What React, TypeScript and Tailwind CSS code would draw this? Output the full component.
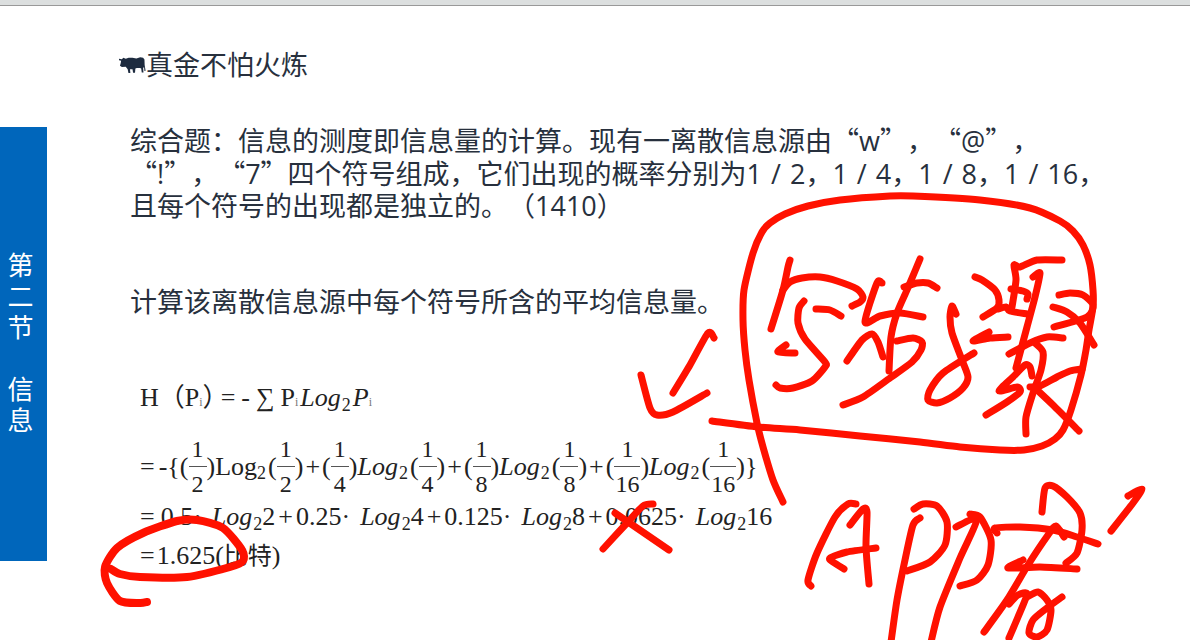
import React from "react";

type Point = [number, number];

const STROKES: { width: number; points: Point[] }[] = [
  // frame around the handwritten note
  { width: 7, points: [[712, 421], [758, 427], [800, 430], [860, 436], [920, 442], [960, 447], [1000, 450], [1024, 450], [1042, 446], [1055, 439], [1063, 430], [1071, 410], [1081, 375], [1086, 350], [1089, 330], [1093, 307], [1093, 290], [1090, 265], [1083, 245], [1073, 231], [1060, 221], [1030, 208], [980, 200], [913, 196], [890, 196], [840, 200], [808, 206], [785, 214], [770, 223], [762, 232], [753, 253], [744, 290], [743, 320], [745, 350], [749, 380], [757, 423], [763, 447], [773, 480], [783, 502]] },
  { width: 7, points: [[790, 260], [788, 267], [783, 290], [771, 329]] },
  { width: 7, points: [[783, 290], [790, 282], [802, 278], [820, 277], [837, 281], [857, 289], [863, 297], [860, 302], [852, 306]] },
  { width: 7, points: [[804, 301], [799, 308], [798, 323], [805, 339], [825, 362], [825, 367], [812, 381], [793, 388], [780, 388], [776, 385]] },
  { width: 7, points: [[816, 309], [830, 310], [841, 316]] },
  { width: 7, points: [[786, 345], [778, 352], [795, 353]] },
  { width: 7, points: [[882, 283], [877, 283], [865, 322], [880, 316], [900, 313], [923, 317]] },
  { width: 7, points: [[920, 259], [915, 271], [907, 290], [897, 313], [891, 337], [889, 371]] },
  { width: 7, points: [[904, 287], [917, 283], [928, 283], [937, 288]] },
  { width: 7, points: [[847, 361], [862, 340], [872, 334], [878, 342], [883, 357]] },
  { width: 7, points: [[897, 341], [913, 338], [922, 342], [921, 350], [912, 362], [890, 378], [863, 397], [843, 405]] },
  { width: 7, points: [[956, 314], [952, 306], [950, 317], [952, 333], [962, 360], [968, 377], [963, 388], [950, 398], [937, 403], [928, 400], [930, 390], [943, 373], [974, 353]] },
  { width: 7, points: [[975, 277], [982, 280], [995, 290], [999, 300], [997, 308], [983, 317]] },
  { width: 7, points: [[1062, 260], [1037, 260], [1020, 267], [1014, 265], [1016, 280], [1012, 307]] },
  { width: 7, points: [[1011, 289], [1023, 291], [1028, 294], [1027, 299]] },
  { width: 7, points: [[998, 309], [1006, 307], [1010, 311], [1027, 314]] },
  { width: 7, points: [[1033, 277], [1040, 273], [1035, 297], [1027, 327], [1016, 368]] },
  { width: 7, points: [[989, 332], [973, 341], [990, 338], [1008, 337]] },
  { width: 7, points: [[1009, 354], [1030, 343], [1047, 337], [1063, 338]] },
  { width: 7, points: [[1035, 343], [1043, 352], [1041, 370], [1033, 393], [1026, 417], [1026, 434]] },
  { width: 7, points: [[1032, 376], [1030, 367], [1025, 365], [1013, 377], [999, 391], [1017, 387], [1020, 392], [1007, 402], [986, 415]] },
  { width: 7, points: [[1030, 387], [1040, 386], [1057, 377], [1070, 371], [1082, 369]] },
  { width: 7, points: [[1035, 388], [1053, 405], [1079, 431]] },
  { width: 7, points: [[1059, 295], [1070, 293], [1083, 295], [1093, 305], [1087, 317], [1054, 327]] },
  { width: 7, points: [[1053, 307], [1067, 312], [1080, 323], [1094, 345]] },
  // arrow towards the formula
  { width: 7, points: [[641, 375], [650, 408], [657, 415], [673, 412], [707, 393]] },
  { width: 7, points: [[714, 338], [708, 333], [690, 365], [673, 393]] },
  // cross
  { width: 7, points: [[615, 513], [669, 550]] },
  { width: 7, points: [[603, 549], [627, 523], [643, 506], [653, 504]] },
  // ring around the result
  { width: 8, points: [[111, 569], [120, 574], [140, 577], [187, 577], [230, 567], [243, 561], [242, 550], [223, 528], [197, 520], [177, 521], [143, 533], [117, 548], [105, 567], [107, 583], [120, 601], [140, 603], [147, 602]] },
  // second note
  { width: 7, points: [[856, 504], [848, 504], [835, 517], [817, 553], [808, 580], [811, 586]] },
  { width: 7, points: [[850, 525], [863, 509], [867, 512], [866, 547], [869, 584]] },
  { width: 7, points: [[876, 548], [847, 552], [830, 558], [833, 562], [844, 569]] },
  { width: 7, points: [[920, 518], [913, 525], [905, 560], [897, 600], [891, 642]] },
  { width: 7, points: [[914, 509], [923, 504], [937, 506], [947, 522], [945, 545], [930, 562], [907, 571]] },
  { width: 7, points: [[956, 527], [977, 519], [960, 558], [940, 607], [931, 642]] },
  { width: 7, points: [[970, 514], [980, 517], [991, 540], [988, 565], [977, 580], [960, 586]] },
  { width: 7, points: [[1042, 512], [1045, 488], [1053, 486], [1067, 497], [1080, 513], [1082, 530], [1077, 553], [1066, 563]] },
  { width: 7, points: [[997, 533], [995, 528], [1020, 527], [1053, 530], [1077, 537], [1098, 544]] },
  { width: 7, points: [[1064, 537], [1056, 526], [1048, 535], [1028, 565], [1007, 600], [984, 632]] },
  { width: 7, points: [[1023, 560], [1008, 568], [1040, 567], [1077, 569]] },
  { width: 7, points: [[1009, 604], [1018, 595], [1027, 594], [1018, 617], [1009, 638]] },
  { width: 7, points: [[1027, 597], [1038, 592], [1047, 600], [1051, 610], [1047, 630], [1037, 637], [1029, 633], [1033, 620], [1047, 608], [1062, 597]] },
  { width: 7, points: [[1128, 496], [1142, 489], [1133, 503], [1111, 531]] },
];

function smoothPath(p: Point[]): string {
  let d = `M${p[0][0]} ${p[0][1]}`;
  for (let i = 0; i < p.length - 1; i++) {
    const a = p[i - 1] ?? p[i];
    const b = p[i];
    const c = p[i + 1];
    const e = p[i + 2] ?? c;
    const k = 8;
    d += `C${b[0] + (c[0] - a[0]) / k} ${b[1] + (c[1] - a[1]) / k} ${c[0] - (e[0] - b[0]) / k} ${c[1] - (e[1] - b[1]) / k} ${c[0]} ${c[1]}`;
  }
  return d;
}

function Ink() {
  return (
    <svg
      className="pointer-events-none absolute left-0 top-0 h-[640px] w-[1190px]"
      viewBox="0 0 1190 640"
      fill="none"
      stroke="#ff1100"
      strokeLinecap="round"
      strokeLinejoin="round"
      aria-hidden="true"
    >
      {STROKES.map((s, i) => (
        <path key={i} d={smoothPath(s.points)} strokeWidth={s.width} />
      ))}
    </svg>
  );
}

function Bull() {
  return (
    <svg className="h-[18px] w-[27px]" viewBox="0 0 28 18" fill="#1d2b3f" aria-hidden="true">
      <path d="M0 2.5 3 3 4.5 1.6 7 2.6 10 1.6 14 1.4 18 2.2 22 1 25 1.6 26.4 3.4 26.6 9 27.6 15 26.4 15.2 26 11 25 12 25.4 16.8 23.6 16.8 23 12.6 21.8 12 18.5 12 17 12.6 16.6 17 14.6 17 14 13.4 11.4 13.4 11.8 17.4 9.8 17.4 9 13.4 7 10.8 3 11 1 9.8 1.8 6.8 2.2 4.6 0 4Z" />
    </svg>
  );
}

function Slash() {
  return <span className="mx-[9px]">/</span>;
}

function Cjk({ children }: { children: React.ReactNode }) {
  return <span className="font-['Noto_Sans_CJK_SC',sans-serif]">{children}</span>;
}

function Frac({ d }: { d: string }) {
  return (
    <span className="inline-flex flex-col items-center text-[24px]">
      <span className="flex h-[34px] items-center">1</span>
      <span className="h-px w-full min-w-[18px] self-stretch bg-[#555]" />
      <span className="flex h-[34px] items-center px-px">{d}</span>
    </span>
  );
}

function Log({ upright = false }: { upright?: boolean }) {
  return (
    <span>
      <span className={upright ? "" : "pr-px italic"}>Log</span>
      <sub className="text-[18px]">2</sub>
    </span>
  );
}

function Term({ d, upright }: { d: string; upright?: boolean }) {
  return (
    <>
      <span>(</span>
      <Frac d={d} />
      <span>)</span>
      <Log upright={upright} />
      <span className="pl-0.5">(</span>
      <Frac d={d} />
      <span>)</span>
    </>
  );
}

function Index() {
  return <span className="text-[12px] leading-none text-[#777]">i</span>;
}

function Product({ p, n }: { p: string; n: string }) {
  return (
    <>
      <span>{p}·</span>
      <span className="pl-2.5">
        <Log />
      </span>
      <span>{n}</span>
    </>
  );
}

function Plus() {
  return <span className="px-[3px]">+</span>;
}

export default function App() {
  return (
    <div
      className="relative min-h-screen overflow-hidden bg-white font-['Open_Sans','Noto_Sans_CJK_SC',sans-serif] text-[#27303d] [text-spacing-trim:space-all]"
      lang="zh-CN"
    >
      <header className="h-[6px] border-b border-[#999] bg-[#dcdfdf]" />
      <div className="flex items-start">
        <aside className="mt-[121px] flex h-[434px] w-[47px] shrink-0 flex-col items-center justify-center bg-[#0066bb] pb-[3px] pr-[6px] text-[26px] leading-[31px] text-white">
          {["第", "二", "节", "\u00a0", "信", "息"].map((c, i) => (
            <span key={i}>{c}</span>
          ))}
        </aside>
        <main className="flex-1 pl-[83px] pt-[43px] text-[27px] leading-[32px]">
          <h1 className="-ml-[11px] flex items-center">
            <Bull />
            <span>真金不怕火炼</span>
          </h1>
          <p className="mt-[43px] whitespace-nowrap">
            综合题：信息的测度即信息量的计算。现有一离散信息源由<Cjk>“</Cjk>w<Cjk>”，“</Cjk>@<Cjk>”，</Cjk>
            <br />
            <Cjk>“</Cjk>!<Cjk>”，“</Cjk>7<Cjk>”</Cjk>四个符号组成，它们出现的概率分别为1<Slash />2，1<Slash />4，1<Slash />8，1<Slash />16，
            <br />
            且每个符号的出现都是独立的。（1410）
          </p>
          <p className="mt-[64px]">计算该离散信息源中每个符号所含的平均信息量。</p>
          <section className="pl-[10px] pt-[64px] font-['Liberation_Serif','Noto_Sans_CJK_SC',serif] text-[26px] text-[#222]">
            <div className="flex items-baseline">
              <span>H</span>
              <span>（</span>
              <span>P</span>
              <Index />
              <span className="-mr-2">）</span>
              <span>=</span>
              <span className="px-1.5">-</span>
              <span>∑</span>
              <span className="pl-1.5">P</span>
              <Index />
              <span className="pl-0.5">
                <Log />
              </span>
              <span className="pl-0.5 italic">P</span>
              <Index />
            </div>
            <div className="mt-[18px] flex items-center">
              <span>=</span>
              <span className="pl-1">-</span>
              <span>{"{"}</span>
              <Term d="2" upright />
              <span className="px-0.5">+</span>
              <Term d="4" />
              <span className="px-0.5">+</span>
              <Term d="8" />
              <span className="px-0.5">+</span>
              <Term d="16" />
              <span>{"}"}</span>
            </div>
            <div className="flex items-baseline">
              <span className="pr-1.5">=</span>
              <Product p="0.5" n="2" />
              <Plus />
              <Product p="0.25" n="4" />
              <Plus />
              <Product p="0.125" n="8" />
              <Plus />
              <Product p="0.0625" n="16" />
            </div>
            <div className="mt-[7px] flex items-baseline">
              <span className="pr-0.5">=</span>
              <span>1.625(</span>
              <span className="text-[24px]">比特</span>
              <span>)</span>
            </div>
          </section>
        </main>
      </div>
      <Ink />
    </div>
  );
}
